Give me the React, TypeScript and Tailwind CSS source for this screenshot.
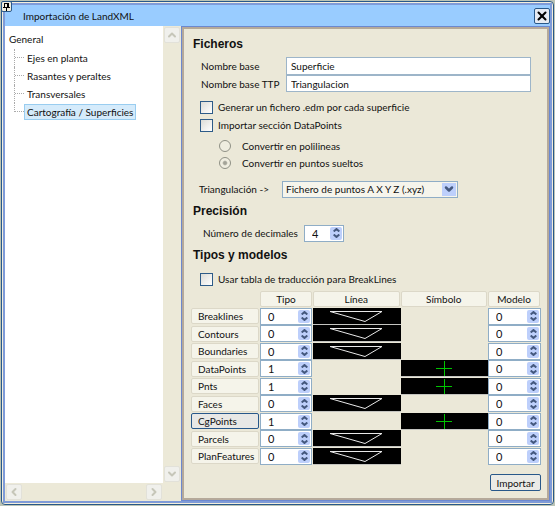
import { useState } from "react";
import { X, ChevronUp, ChevronDown, ChevronLeft, ChevronRight } from "lucide-react";

const treeItems = ["Ejes en planta", "Rasantes y peraltes", "Transversales", "Cartografía / Superficies"];

type Row = { name: string; type: string; kind: "line" | "symbol" };
const rows: Row[] = [
  { name: "Breaklines", type: "0", kind: "line" },
  { name: "Contours", type: "0", kind: "line" },
  { name: "Boundaries", type: "0", kind: "line" },
  { name: "DataPoints", type: "1", kind: "symbol" },
  { name: "Pnts", type: "1", kind: "symbol" },
  { name: "Faces", type: "0", kind: "line" },
  { name: "CgPoints", type: "1", kind: "symbol" },
  { name: "Parcels", type: "0", kind: "line" },
  { name: "PlanFeatures", type: "0", kind: "line" },
];

function Spinner({ label, initial, id }: { label?: string; initial: string; id?: string }) {
  const [value, setValue] = useState(initial);
  const step = (n: number) => setValue((v) => String(Math.max(0, Number(v) + n)));
  return (
    <div className="flex h-full w-full border border-[#8fadc6] bg-white">
      <input
        id={id}
        aria-label={label}
        value={value}
        onChange={(e) => setValue(e.target.value)}
        className="h-full w-0 min-w-0 flex-1 bg-transparent pl-[7px] text-[11px] outline-none"
      />
      <div className="my-px mr-px flex w-3 shrink-0 flex-col items-center justify-center rounded-xs bg-[#bdcffb] text-[#45597f]">
        <button type="button" aria-label="Aumentar" onClick={() => step(1)} className="flex h-1.5 items-center">
          <svg viewBox="0 0 7 4" className="h-1 w-[7px]" fill="none" stroke="currentColor" strokeWidth="2">
            <path d="M.7 3.500 3.500 1l2.800 2.500" />
          </svg>
        </button>
        <button type="button" aria-label="Disminuir" onClick={() => step(-1)} className="flex h-1.5 items-center">
          <svg viewBox="0 0 7 4" className="h-1 w-[7px]" fill="none" stroke="currentColor" strokeWidth="2">
            <path d="M.7.5 3.500 3l2.800-2.500" />
          </svg>
        </button>
      </div>
    </div>
  );
}

function Check({ label }: { label: string }) {
  return (
    <label className="flex h-[18px] items-center gap-[5px] whitespace-nowrap">
      <input
        type="checkbox"
        className="size-[13px] shrink-0 appearance-none border border-[#2d5b88] bg-linear-to-br from-[#dcdcd7] to-white checked:bg-[#7aa0c8]"
      />
      {label}
    </label>
  );
}

function Radio({ label, checked }: { label: string; checked?: boolean }) {
  return (
    <label className="flex h-[17px] items-center gap-[11px] whitespace-nowrap">
      <input
        type="radio"
        name="conversion"
        defaultChecked={checked}
        className="size-3 shrink-0 appearance-none rounded-full border border-[#8f9085] bg-[#efede0] checked:bg-radial checked:from-[#a3a398] checked:from-20% checked:to-[#efede0] checked:to-40%"
      />
      {label}
    </label>
  );
}

function LinePreview() {
  return (
    <svg viewBox="0 0 88 16" className="mx-auto h-4 w-[88px]" fill="none" stroke="#e8e8e8" aria-hidden="true">
      <path d="M17 3.500H69L52 13.500Z" />
    </svg>
  );
}

function SymbolPreview() {
  return (
    <svg viewBox="0 0 16 16" className="mx-auto size-4" fill="none" stroke="#00c400" aria-hidden="true">
      <path d="M0 8.500H16M8.500 1V16" />
    </svg>
  );
}

const scrollButton = "flex size-4 items-center justify-center rounded-xs border border-[#e2e1d9] bg-[#f0f0ec] text-[#c6c6b9]";
const heading = "font-['Liberation_Sans',sans-serif] text-[12px] leading-[18px] font-bold text-[#111]";

export default function App() {
  const [selected, setSelected] = useState("Cartografía / Superficies");
  return (
    <div className="relative h-screen min-h-[506px] bg-[#bcc4b6] p-px font-[Lato,sans-serif] text-[10px] leading-[14px] text-[#111]">
      <div className="h-full rounded-sm border border-[#28588a] bg-[#f4efdc] p-px">
        <div className="flex h-full flex-col border-2 border-[#7f9bd8] bg-[#9cf]">
          <header className="flex h-[21px] shrink-0 items-center justify-between bg-[#9cf] pl-[18px]">
            <h1>Importación de LandXML</h1>
            <button type="button" aria-label="Cerrar" className="flex size-4 items-center justify-center rounded-xs border border-[#28588a] bg-[#e6ebf3] text-black">
              <X className="size-3.5" strokeWidth={3.5} />
            </button>
          </header>

          <div className="flex min-h-0 flex-1">
            <aside className="grid w-[176px] shrink-0 grid-cols-[1fr_18px] grid-rows-[1fr_18px] bg-[#ece9d8]">
              <nav className="bg-white pt-1.5 pl-1">
                <p className="h-[17px]">General</p>
                <ul className="ml-[5px]">
                  {treeItems.map((item) => (
                    <li key={item} className="group flex h-[18px] items-center">
                      <span className="flex h-full w-[10px] flex-col border-l border-dotted border-[#aaa] group-last:mb-auto group-last:h-[9px]">
                        <span className="mt-2 border-t border-dotted border-[#aaa]" />
                      </span>
                      <button
                        type="button"
                        onClick={() => setSelected(item)}
                        className={
                          item === selected
                            ? "h-4 border border-[#99cdf0] bg-[#d5ebfb] px-0.5 leading-[14px] whitespace-nowrap"
                            : "h-4 border border-transparent px-0.5 leading-[14px] whitespace-nowrap"
                        }
                      >
                        {item}
                      </button>
                    </li>
                  ))}
                </ul>
              </nav>
              <div className="flex flex-col items-center justify-between py-px">
                <button type="button" aria-label="Subir" className={scrollButton}><ChevronUp className="size-3" strokeWidth={4} /></button>
                <button type="button" aria-label="Bajar" className={scrollButton}><ChevronDown className="size-3" strokeWidth={4} /></button>
              </div>
              <div className="flex items-center justify-between px-px">
                <button type="button" aria-label="Izquierda" className={scrollButton}><ChevronLeft className="size-3" strokeWidth={4} /></button>
                <button type="button" aria-label="Derecha" className={scrollButton}><ChevronRight className="size-3" strokeWidth={4} /></button>
              </div>
            </aside>

            <main className="flex min-w-0 flex-1 flex-col border border-[#6c88cf] bg-[#ebe8d8]">
              <form className="flex flex-1 flex-col border-2 border-[#b5a99a] pr-1.5 pl-[7px]" onSubmit={(e) => e.preventDefault()}>
                <h2 className={"mt-1.5 ml-0.5 " + heading}>Ficheros</h2>
                <div className="mt-1 mr-2.5 ml-2.5 grid grid-cols-[85px_1fr] items-center">
                  <label htmlFor="base">Nombre base</label>
                  <input id="base" defaultValue="Superficie" className="h-[18px] min-w-0 border border-[#9db5c9] bg-white px-1" />
                  <label htmlFor="ttp">Nombre base TTP</label>
                  <input id="ttp" defaultValue="Triangulacion" className="h-[17px] min-w-0 border border-[#9db5c9] bg-white px-1" />
                </div>
                <div className="mt-1.5 ml-[9px]">
                  <Check label="Generar un fichero .edm por cada superficie" />
                  <Check label="Importar sección DataPoints" />
                </div>
                <div className="mt-[3px] ml-7">
                  <Radio label="Convertir en polilineas" />
                  <Radio label="Convertir en puntos sueltos" checked />
                </div>
                <div className="mt-[9px] ml-2 flex h-[18px] items-center">
                  <label htmlFor="tri" className="w-[83px]">Triangulación -&gt;</label>
                  <div className="grid h-[17px] w-44 grid-cols-[1fr_14px] items-stretch border border-[#8fadc6] bg-[#f6f5ec] p-px">
                    <select id="tri" className="col-span-2 col-start-1 row-start-1 appearance-none pl-0.5 leading-[13px] outline-none">
                      <option>Fichero de puntos A X Y Z (.xyz)</option>
                    </select>
                    <span className="pointer-events-none col-start-2 row-start-1 flex items-center justify-center bg-[#bdcffb] text-[#45597f]">
                      <ChevronDown className="size-3" strokeWidth={5} />
                    </span>
                  </div>
                </div>
                <h2 className={"mt-1 ml-0.5 " + heading}>Precisión</h2>
                <div className="mt-1 ml-3 flex h-[18px] items-center">
                  <label htmlFor="dec" className="w-[101px] whitespace-nowrap">Número de decimales</label>
                  <div className="h-[17px] w-10"><Spinner id="dec" initial="4" /></div>
                </div>
                <h2 className={"mt-1 ml-0.5 " + heading}>Tipos y modelos</h2>
                <div className="mt-1.5 ml-[9px]">
                  <Check label="Usar tabla de traducción para BreakLines" />
                </div>
                <table className="mt-0.5 w-full table-fixed border-collapse">
                  <colgroup>
                    <col className="w-[69px]" />
                    <col className="w-[53px]" />
                    <col />
                    <col />
                    <col className="w-[53px]" />
                  </colgroup>
                  <thead>
                    <tr className="h-[17px]">
                      <td />
                      {["Tipo", "Línea", "Símbolo", "Modelo"].map((h) => (
                        <th key={h} scope="col" className="p-0 pr-px font-normal">
                          <div className="h-4 rounded-xs border border-[#dcd8c8] bg-[#f5f4ea]">{h}</div>
                        </th>
                      ))}
                    </tr>
                  </thead>
                  <tbody>
                    {rows.map((r) => (
                      <tr key={r.name} className="odd:h-[18px] even:h-[17px]">
                        <th scope="row" className="p-0 pr-px font-normal">
                          <button
                            type="button"
                            className={
                              r.name === "CgPoints"
                                ? "block h-4 w-full rounded-xs border border-[#28588a] bg-[#e8e8e6] pl-1.5 text-left"
                                : "block h-4 w-full rounded-xs border border-[#dcd8c8] bg-[#f5f4ea] pl-1.5 text-left"
                            }
                          >
                            {r.name}
                          </button>
                        </th>
                        <td className="p-0 pr-px"><div className="h-[17px]"><Spinner label={"Tipo " + r.name} initial={r.type} /></div></td>
                        <td className="p-0">{r.kind === "line" && <div className="border-b border-[#c4c4c0] bg-black"><LinePreview /></div>}</td>
                        <td className="p-0">{r.kind === "symbol" && <div className="border-b border-[#c4c4c0] bg-black"><SymbolPreview /></div>}</td>
                        <td className="p-0"><div className="h-[17px]"><Spinner label={"Modelo " + r.name} initial="0" /></div></td>
                      </tr>
                    ))}
                  </tbody>
                </table>
                <button type="submit" className="mt-[9px] h-[17px] w-[51px] self-end rounded-xs border border-[#28588a] bg-[#ebebe7] leading-[14px]">
                  Importar
                </button>
              </form>
            </main>
          </div>
        </div>
      </div>
      <button type="button" aria-label="Fijar" className="absolute top-px left-px flex size-[11px] items-center justify-center rounded-xs border border-[#28588a] bg-[#f1eedf] text-black">
        <svg viewBox="0 0 9 9" className="size-[9px]" fill="none" stroke="currentColor" aria-hidden="true">
          <path d="M2 1.500H7M2.500 1V5M1 5.500H8M4.500 5V9" />
          <path d="M6 1V5" strokeWidth="2" />
        </svg>
      </button>
    </div>
  );
}
